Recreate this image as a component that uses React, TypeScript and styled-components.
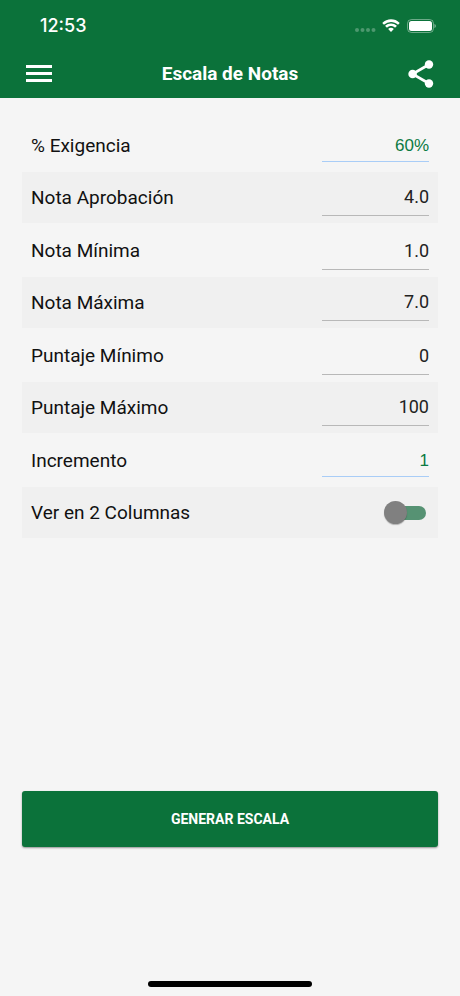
import React, { useState } from "react";
import styled, { createGlobalStyle } from "styled-components";

const GREEN = "#0b723a";

const GlobalStyle = createGlobalStyle`
  *, *::before, *::after { box-sizing: border-box; }
  body {
    margin: 0;
    background: #f5f5f5;
    color: #111;
    font-family: Roboto, "Liberation Sans", sans-serif;
  }
`;

const Screen = styled.div`
  display: flex;
  flex-direction: column;
  min-height: 100vh;
`;

const Header = styled.header`
  background: ${GREEN};
  color: #fff;
`;

const StatusBar = styled.div`
  display: flex;
  align-items: center;
  justify-content: space-between;
  height: 50px;
  padding: 2px 24px 0 40px;
`;

const Clock = styled.span`
  font: 500 18px/24px Inter, sans-serif;
`;

const StatusIcons = styled.div`
  display: flex;
  align-items: center;
`;

const NavBar = styled.nav`
  display: grid;
  grid-template-columns: 48px 1fr 48px;
  align-items: center;
  height: 48px;
  padding: 0 15px;
`;

const IconButton = styled.button`
  display: flex;
  align-items: center;
  justify-content: center;
  height: 48px;
  padding: 0;
  border: 0;
  background: none;
  color: inherit;
  cursor: pointer;
`;

const Title = styled.h1`
  margin: 0;
  font-size: 19px;
  line-height: 24px;
  font-weight: 700;
  text-align: center;
`;

const Form = styled.form`
  display: flex;
  flex: 1;
  flex-direction: column;
  padding: 20px 22px 9px;
`;

const Row = styled.div<{ $shaded: boolean }>`
  display: flex;
  align-items: center;
  justify-content: space-between;
  height: ${(p) => (p.$shaded ? 51 : 54)}px;
  padding: ${(p) => (p.$shaded ? 0 : 2)}px 9px 0;
  background: ${(p) => (p.$shaded ? "#f0f0f0" : "transparent")};
`;

const Label = styled.label`
  font-size: 19px;
  line-height: 24px;
`;

const Field = styled.input<{ $picker: boolean }>`
  align-self: flex-end;
  width: 27%;
  height: ${(p) => (p.$picker ? 32 : 38)}px;
  margin: 0 0 ${(p) => (p.$picker ? 10 : 7)}px;
  padding: 0;
  border: 0;
  border-bottom: 1px solid ${(p) => (p.$picker ? "#a9cdf7" : "#b8b8b8")};
  border-radius: 0;
  outline: 0;
  background: none;
  color: ${(p) => (p.$picker ? "#0b7a43" : "#222")};
  font-family: ${(p) => (p.$picker ? '"Liberation Sans"' : "Roboto")}, sans-serif;
  font-size: ${(p) => (p.$picker ? 17 : 18)}px;
  text-align: right;
`;

const Switch = styled.input`
  display: flex;
  align-items: center;
  appearance: none;
  width: 42px;
  height: 24px;
  margin: 0 3px 0 0;
  cursor: pointer;

  &::before {
    content: "";
    flex: none;
    width: 34px;
    height: 14px;
    margin-left: 8px;
    border-radius: 7px;
    background: #569273;
  }

  &::after {
    content: "";
    flex: none;
    width: 23px;
    height: 23px;
    margin-left: -42px;
    border-radius: 50%;
    background: #808080;
    box-shadow: 0 1px 1px rgba(0, 0, 0, 0.25);
  }

  &:checked::after {
    margin-left: -23px;
    background: ${GREEN};
  }
`;

const GenerateButton = styled.button`
  height: 56px;
  margin: auto 0 134px;
  border: 0;
  border-radius: 3px;
  background: ${GREEN};
  box-shadow: 0 1px 2px rgba(0, 0, 0, 0.4);
  color: #fff;
  font: 700 14px/20px Roboto, sans-serif;
  text-transform: uppercase;
  cursor: pointer;
`;

const HomeIndicator = styled.div`
  align-self: center;
  width: 164px;
  height: 6px;
  border-radius: 3px;
  background: #000;
`;

const SignalIcon = () => (
  <svg width="22" height="14" viewBox="0 0 22 14" fill="#fff" fillOpacity=".27" aria-hidden="true">
    <circle cx="3" cy="11" r="2" />
    <circle cx="8.5" cy="11" r="2" />
    <circle cx="14" cy="11" r="2" />
    <circle cx="19.5" cy="11" r="2" />
  </svg>
);

const WifiIcon = () => (
  <svg width="30" height="14" viewBox="0 0 30 14" fill="#fff" aria-hidden="true">
    <path d="M15 2.9c2.6 0 4.9 1 6.7 2.7.2.2.4.2.6 0l1.2-1.3c.2-.2.2-.4 0-.6A12.2 12.2 0 0 0 15 .3c-3.300 0-6.300 1.300-8.500 3.400-.2.2-.2.4 0 .6l1.200 1.300c.2.2.4.2.6 0A9.700 9.700 0 0 1 15 2.900z" />
    <path d="M15 7.100c1.400 0 2.700.5 3.700 1.500.2.2.4.2.6 0l1.300-1.300c.2-.2.2-.5 0-.7A8.100 8.100 0 0 0 15 4.500c-2.200 0-4.100.8-5.600 2.100-.2.2-.2.5 0 .7l1.300 1.300c.2.2.4.2.6 0 1-1 2.300-1.500 3.700-1.500z" />
    <path d="M17.600 10.300c.2-.2.2-.4 0-.6-.7-.6-1.600-1-2.600-1s-1.900.4-2.600 1c-.2.2-.2.4 0 .6l2.300 2.400c.2.2.4.2.6 0z" />
  </svg>
);

const BatteryIcon = () => (
  <svg width="30" height="14" viewBox="0 0 30 14" aria-hidden="true">
    <rect x="1.500" y=".5" width="26" height="13" rx="4" fill="none" stroke="#fff" strokeOpacity=".4" />
    <rect x="3" y="2" width="23" height="10" rx="2.500" fill="#fff" />
    <path d="M28.500 5v4c.8-.3 1.300-1.100 1.300-2s-.5-1.700-1.300-2z" fill="#fff" fillOpacity=".5" />
  </svg>
);

const MenuIcon = () => (
  <svg width="26" height="18" viewBox="0 0 26 18" fill="#fff" aria-hidden="true">
    <path d="M0 0h26v3H0zM0 7h26v3H0zM0 14h26v3H0z" />
  </svg>
);

const ShareIcon = () => (
  <svg width="26" height="28" viewBox="0 0 26 28" fill="#fff" aria-hidden="true">
    <path d="M21 4.500 4.500 14 21 23.500" fill="none" stroke="#fff" strokeWidth="2.700" />
    <circle cx="21" cy="4.500" r="4.200" />
    <circle cx="4.600" cy="14" r="4.300" />
    <circle cx="21" cy="23.500" r="4.200" />
  </svg>
);

const FIELDS = [
  { id: "exigencia", label: "% Exigencia", value: "60%", picker: true },
  { id: "aprobacion", label: "Nota Aprobación", value: "4.0", picker: false },
  { id: "nota-minima", label: "Nota Mínima", value: "1.0", picker: false },
  { id: "nota-maxima", label: "Nota Máxima", value: "7.0", picker: false },
  { id: "puntaje-minimo", label: "Puntaje Mínimo", value: "0", picker: false },
  { id: "puntaje-maximo", label: "Puntaje Máximo", value: "100", picker: false },
  { id: "incremento", label: "Incremento", value: "1", picker: true },
];

export default function App() {
  const [twoColumns, setTwoColumns] = useState(false);

  return (
    <Screen>
      <GlobalStyle />
      <Header>
        <StatusBar>
          <Clock>12:53</Clock>
          <StatusIcons>
            <SignalIcon />
            <WifiIcon />
            <BatteryIcon />
          </StatusIcons>
        </StatusBar>
        <NavBar>
          <IconButton type="button" aria-label="Menú">
            <MenuIcon />
          </IconButton>
          <Title>Escala de Notas</Title>
          <IconButton type="button" aria-label="Compartir">
            <ShareIcon />
          </IconButton>
        </NavBar>
      </Header>
      <Form onSubmit={(e) => e.preventDefault()}>
        {FIELDS.map((f, i) => (
          <Row key={f.id} $shaded={i % 2 === 1}>
            <Label htmlFor={f.id}>{f.label}</Label>
            <Field id={f.id} type="text" inputMode="decimal" defaultValue={f.value} $picker={f.picker} />
          </Row>
        ))}
        <Row $shaded>
          <Label htmlFor="dos-columnas">Ver en 2 Columnas</Label>
          <Switch
            id="dos-columnas"
            type="checkbox"
            role="switch"
            checked={twoColumns}
            onChange={(e) => setTwoColumns(e.target.checked)}
          />
        </Row>
        <GenerateButton type="submit">Generar escala</GenerateButton>
        <HomeIndicator />
      </Form>
    </Screen>
  );
}
